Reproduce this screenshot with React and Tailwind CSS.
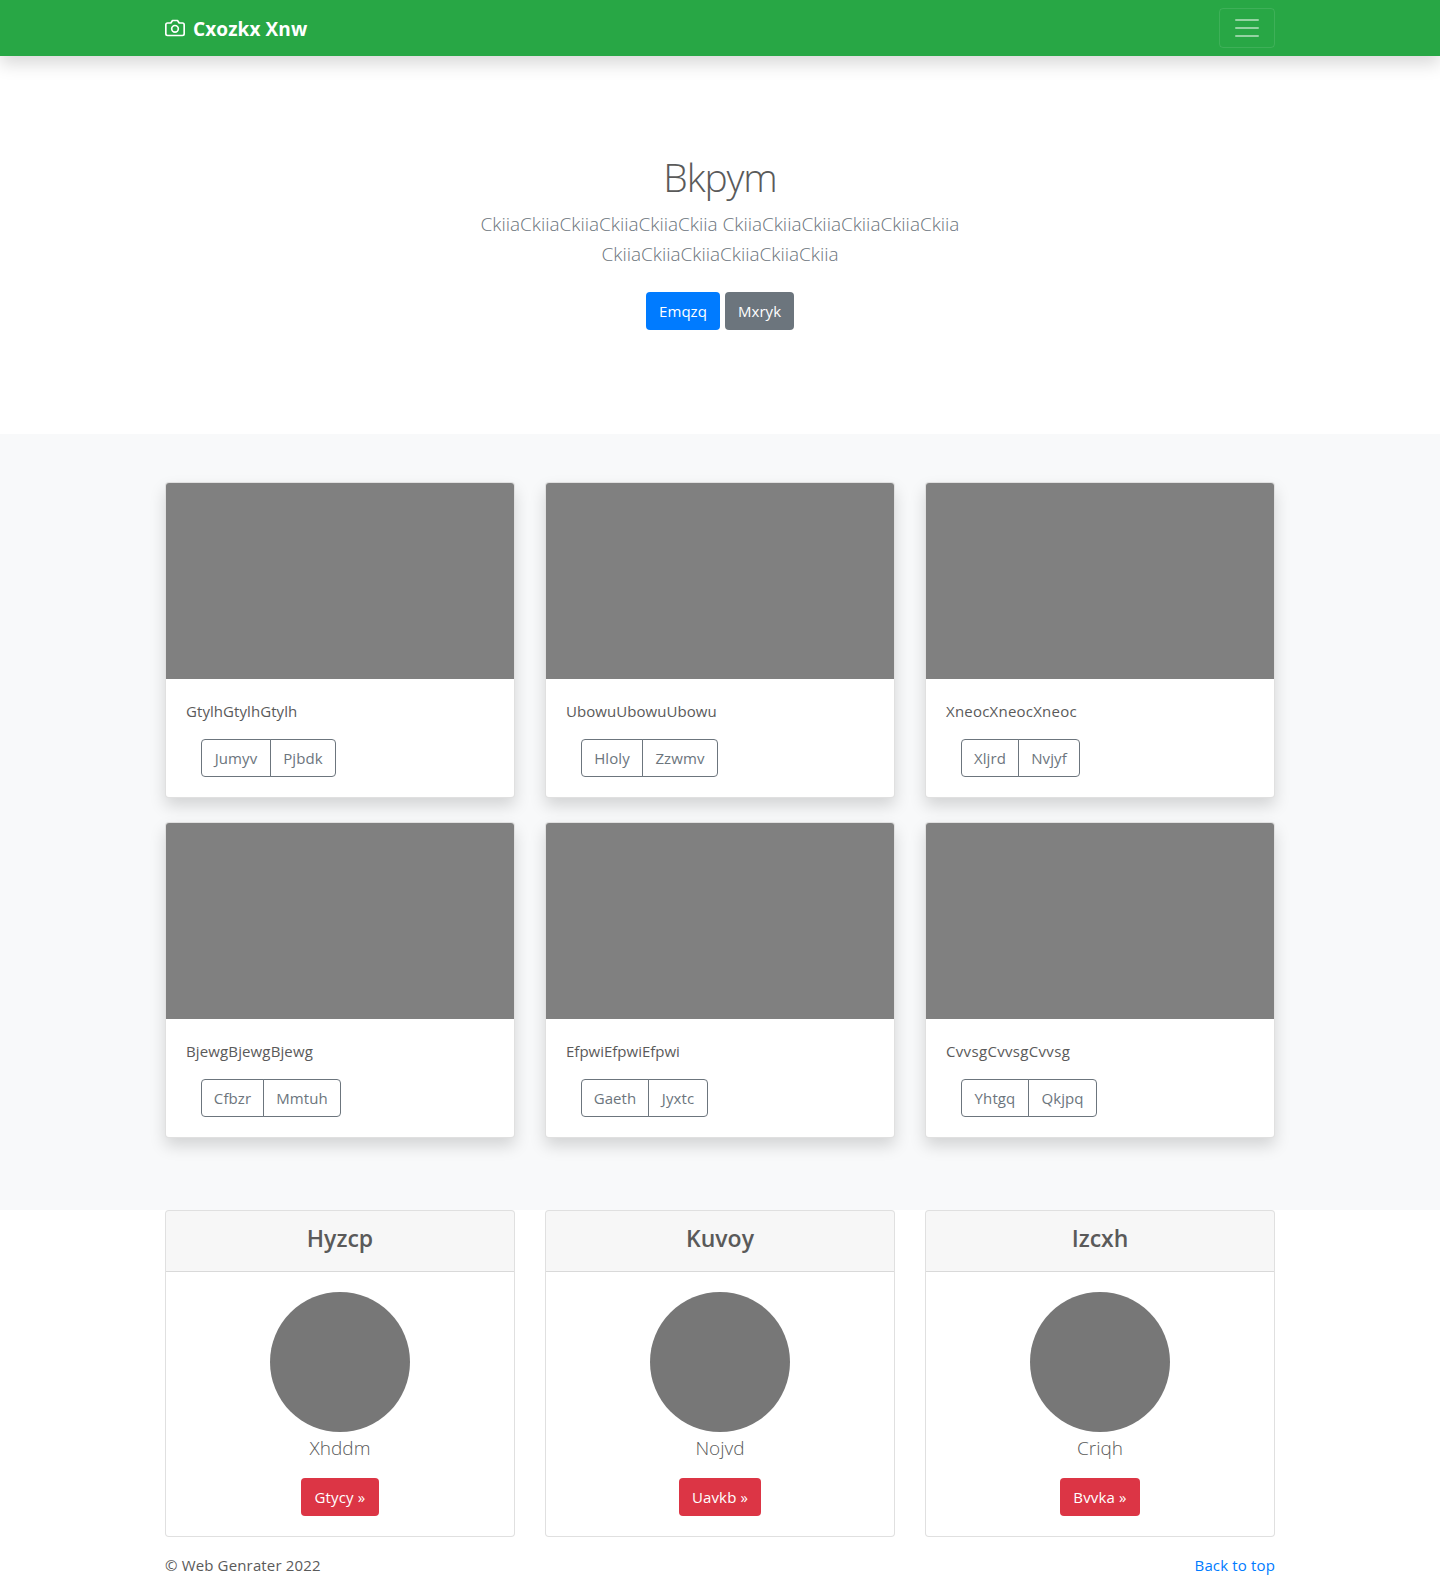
const albums = [
  { text: "GtylhGtylhGtylh", a: "Jumyv", b: "Pjbdk", wa: "w-[70px]", wb: "w-[66px]", tracking: "tracking-[0.07px]" },
  { text: "UbowuUbowuUbowu", a: "Hloly", b: "Zzwmv", wa: "w-[62px]", wb: "w-[76px]", tracking: "tracking-[0.06px]" },
  { text: "XneocXneocXneoc", a: "Xljrd", b: "Nvjyf", wa: "w-[58px]", wb: "w-[62px]", tracking: "tracking-[0.22px]" },
  { text: "BjewgBjewgBjewg", a: "Cfbzr", b: "Mmtuh", wa: "w-[63px]", wb: "w-[78px]", tracking: "tracking-[0.13px]" },
  { text: "EfpwiEfpwiEfpwi", a: "Gaeth", b: "Jyxtc", wa: "w-[68px]", wb: "w-[60px]", tracking: "tracking-normal" },
  { text: "CvvsgCvvsgCvvsg", a: "Yhtgq", b: "Qkjpq", wa: "w-[68px]", wb: "w-[69px]", tracking: "tracking-[0.33px]" },
];

const people = [
  { title: "Hyzcp", name: "Xhddm", action: "Gtycy »", w: "w-[78px]" },
  { title: "Kuvoy", name: "Nojvd", action: "Uavkb »", w: "w-[82px]" },
  { title: "Izcxh", name: "Criqh", action: "Bvvka »", w: "w-[80px]" },
];

function Header() {
  return (
    <header className="relative bg-[#28a745] shadow-[0_8px_16px_rgba(0,0,0,0.15)]">
      <div className="mx-auto flex h-14 w-[1110px] items-center justify-between">
        <a href="#" className="flex items-center text-white">
          <svg width="20" height="20" viewBox="0 0 24 24" fill="none" stroke="currentColor" strokeWidth="2" strokeLinecap="round" strokeLinejoin="round" className="mr-2">
            <path d="M23 19a2 2 0 0 1-2 2H3a2 2 0 0 1-2-2V8a2 2 0 0 1 2-2h4l2-3h6l2 3h4a2 2 0 0 1 2 2z" />
            <circle cx="12" cy="13" r="4" />
          </svg>
          <strong className="mt-0.5 text-[19px] leading-[30px] font-bold tracking-[0.1px] whitespace-nowrap">Cxozkx Xnw</strong>
        </a>
        <button aria-label="Menu" className="flex h-10 w-14 items-center justify-center rounded border border-white/10">
          <svg width="30" height="30" viewBox="0 0 30 30" fill="none" stroke="rgba(255,255,255,0.5)" strokeWidth="2" strokeMiterlimit="10" strokeLinecap="round">
            <path d="M4 7h22M4 15h22M4 23h22" />
          </svg>
        </button>
      </div>
    </header>
  );
}

function Hero() {
  return (
    <section className="flex h-[378px] flex-col items-center pt-[97px] text-center">
      <h1 className="text-[39px] leading-[48px] font-light tracking-[-1.1px]">Bkpym</h1>
      <p className="mt-2 w-[560px] text-[19px] leading-[30px] font-light tracking-[-0.03px] text-[#6c757d]">
        CkiiaCkiiaCkiiaCkiiaCkiiaCkiia CkiiaCkiiaCkiiaCkiiaCkiiaCkiia CkiiaCkiiaCkiiaCkiiaCkiiaCkiia
      </p>
      <div className="mt-[23px] flex gap-[5px] text-[15px] tracking-[0.05px] text-white">
        <a href="#" className="flex h-[38px] w-[74px] items-center justify-center rounded bg-[#007bff]">Emqzq</a>
        <a href="#" className="flex h-[38px] w-[69px] items-center justify-center rounded bg-[#6c757d]">Mxryk</a>
      </div>
    </section>
  );
}

function AlbumCard({ item }) {
  return (
    <article className="flex h-[316px] flex-col overflow-hidden rounded border border-black/12 bg-white shadow-[0_8px_16px_rgba(0,0,0,0.15)]">
      <div className="h-[196px] bg-[#808080]" />
      <div className="p-5">
        <p className={`text-[15px] leading-6 ${item.tracking}`}>{item.text}</p>
        <div className="mt-4 ml-[15px] flex text-[15px] tracking-[0.1px] text-[#6c757d]">
          <button className={`flex h-[38px] items-center justify-center rounded-l border border-[#6c757d] ${item.wa}`}>{item.a}</button>
          <button className={`-ml-px flex h-[38px] items-center justify-center rounded-r border border-[#6c757d] ${item.wb}`}>{item.b}</button>
        </div>
      </div>
    </article>
  );
}

function PersonCard({ item }) {
  return (
    <article className="flex h-[327px] flex-col items-center overflow-hidden rounded border border-black/12 bg-white">
      <h4 className="h-[61px] w-full border-b border-black/12 bg-black/3 pt-[13px] text-center text-[23px] leading-[29px] font-semibold">{item.title}</h4>
      <div className="mt-5 size-[140px] shrink-0 rounded-full bg-[#777777]" />
      <p className="mt-px text-[19px] leading-[30px] font-light">{item.name}</p>
      <a href="#" className={`mt-[15px] flex h-[38px] items-center justify-center rounded bg-[#dc3545] text-[15px] tracking-[0.15px] text-white ${item.w}`}>{item.action}</a>
    </article>
  );
}

export default function App() {
  return (
    <div className="h-[1577px] overflow-hidden bg-white font-['Open_Sans','Noto_Sans',sans-serif] text-base text-[#5a5a5a]">
      <Header />
      <main>
        <Hero />
        <section className="h-[776px] bg-[#f8f9fa] pt-12">
          <div className="mx-auto grid w-[1110px] grid-cols-3 gap-x-[30px] gap-y-6">
            {albums.map((item) => <AlbumCard key={item.text} item={item} />)}
          </div>
        </section>
        <section className="mx-auto grid w-[1110px] grid-cols-3 gap-x-[30px]">
          {people.map((item) => <PersonCard key={item.title} item={item} />)}
        </section>
      </main>
      <footer className="mx-auto mt-4 flex w-[1110px] justify-between text-[15px] leading-6 tracking-[0.15px]">
        <p>© Web Genrater 2022</p>
        <a href="#" className="text-[#007bff]">Back to top</a>
      </footer>
    </div>
  );
}
